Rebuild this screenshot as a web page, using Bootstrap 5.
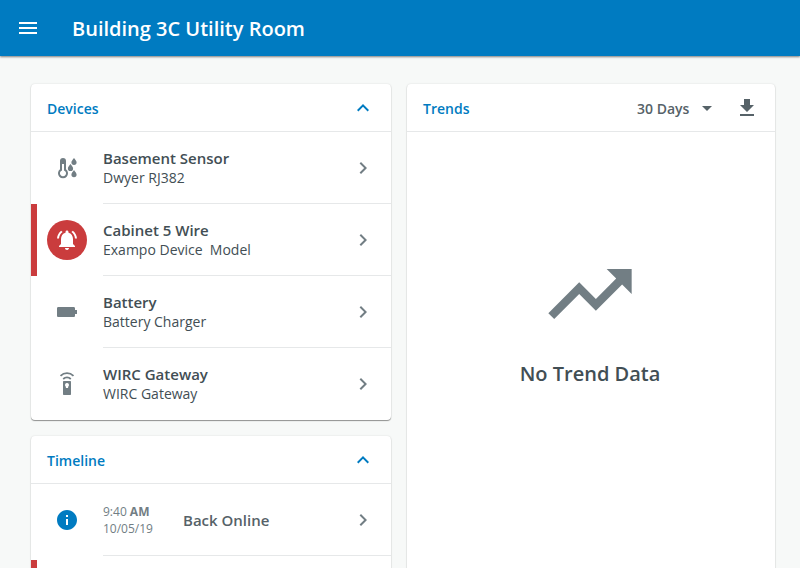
<!DOCTYPE html>
<html lang="en">
<head>
<meta charset="utf-8">
<meta name="viewport" content="width=device-width, initial-scale=1">
<title>Building 3C Utility Room</title>
<link href="https://cdn.jsdelivr.net/npm/bootstrap@5.3.0/dist/css/bootstrap.min.css" rel="stylesheet">
<style>
:root { --blue: #007bc1; --ink: #424e54; --slate: #727e84; --alert: #ca3c3d; --rule: #e6e8e9; }
body { font-family: "Open Sans", sans-serif; font-size: 14px; line-height: 20px; color: var(--ink); background: #f7f9f8; }
svg { display: block; width: 24px; height: 24px; fill: currentColor; flex: none; }
.app-bar { height: 56px; background: var(--blue); box-shadow: 0 1px 2px rgba(0,0,0,.5); z-index: 1; }
.app-title { font-size: 20px; line-height: 28px; font-weight: 600; padding-top: 2px; }
.dashboard { display: grid; grid-template-columns: 360fr 368fr; gap: 16px; padding: 28px 25px 28px 31px; }
.panel { background: #fff; border-radius: 4px; box-shadow: 0 1px 1px rgba(0,0,0,.4), 0 0 2px rgba(0,0,0,.12); overflow: hidden; }
.panel-head { height: 48px; padding: 0 16px; border-bottom: 1px solid var(--rule); color: var(--blue); }
.panel-title { font-size: 14px; line-height: 20px; font-weight: 600; margin: 0; padding-top: 2px; }
.icon-btn { border: 0; padding: 0; background: none; color: inherit; }
.entry { display: flex; gap: 16px; height: 72px; padding-left: 16px; color: inherit; text-decoration: none; }
.entry.alarm { box-shadow: inset 6px 0 var(--alert); }
.entry-icon { width: 40px; height: 40px; border-radius: 50%; color: var(--slate); }
.alarm .entry-icon { background: var(--alert); color: #fff; }
.entry-body { border-bottom: 1px solid var(--rule); padding-right: 16px; }
li:last-child .entry-body { border-color: transparent; }
.entry-body svg { color: var(--slate); }
.entry-name { font-size: 15px; font-weight: 600; }
.stamp { width: 80px; font-size: 12px; line-height: 17px; color: var(--slate); }
.event-name, .range { color: #566268; }
.range-select { appearance: none; border: 0; background: none; padding: 2px 29px 0 0; font-size: 14px; line-height: 20px; font-weight: 600; color: inherit; }
.range-arrow { margin-left: -24px; pointer-events: none; }
.empty-state { padding: 112px 2px 0 0; }
.empty-state svg { width: 100px; height: 100px; color: var(--slate); }
.empty-text { font-size: 20px; line-height: 28px; font-weight: 600; margin-top: 16px; }
</style>
<script src="https://cdn.jsdelivr.net/npm/bootstrap@5.3.0/dist/js/bootstrap.bundle.min.js"></script>
</head>
<body class="vh-100 d-flex flex-column overflow-hidden">
<svg class="d-none" aria-hidden="true">
  <symbol id="up" viewBox="0 0 24 24"><path d="M12 8l-6 6 1.41 1.41L12 10.83l4.59 4.58L18 14z"/></symbol>
  <symbol id="next" viewBox="0 0 24 24"><path d="M10 6L8.59 7.41 13.17 12l-4.58 4.59L10 18l6-6z"/></symbol>
</svg>
<header class="app-bar d-flex align-items-center flex-shrink-0 px-3 text-white">
  <button class="icon-btn me-3" type="button" aria-label="Menu"><svg viewBox="0 0 24 24"><path d="M3 18h18v-2H3v2zm0-5h18v-2H3v2zm0-7v2h18V6H3z"/></svg></button>
  <h1 class="app-title mb-0 ms-3">Building 3C Utility Room</h1>
</header>
<main class="dashboard flex-shrink-0">
  <div class="d-flex flex-column gap-3">
    <section class="panel">
      <div class="panel-head d-flex align-items-center justify-content-between">
        <h2 class="panel-title">Devices</h2>
        <button class="icon-btn" type="button" aria-label="Collapse devices"><svg><use href="#up"/></svg></button>
      </div>
      <ul class="list-unstyled mb-0">
        <li><a class="entry align-items-center" href="#">
          <span class="entry-icon d-flex align-items-center justify-content-center"><svg viewBox="0 0 24 24"><path fill-rule="evenodd" d="M5 5a3 3 0 0 1 6 0v8.3a5 5 0 1 1-6 0zM7 8v6.4a3 3 0 1 0 2 0V8z"/><path d="M19 1.9c1 1.5 2.6 3 2.6 4.4a2.6 2.6 0 0 1-5.2 0C16.400 4.900 18 3.400 19 1.900zM15.500 8c1 1.500 2.600 3 2.600 4.400a2.600 2.600 0 0 1-5.200 0c0-1.400 1.600-2.900 2.600-4.400zM19 14c1 1.500 2.600 3 2.600 4.600a2.600 2.600 0 0 1-5.200 0c0-1.600 1.600-3.100 2.600-4.600z"/></svg></span>
          <span class="entry-body d-flex align-items-center flex-grow-1 h-100"><span class="flex-grow-1"><span class="entry-name d-block">Basement Sensor</span><span class="d-block">Dwyer RJ382</span></span><svg><use href="#next"/></svg></span>
        </a></li>
        <li><a class="entry alarm align-items-center" href="#">
          <span class="entry-icon d-flex align-items-center justify-content-center"><svg viewBox="0 0 24 24"><path d="M7.580 4.080L6.150 2.650C3.750 4.480 2.170 7.300 2.030 10.500h2c.15-2.650 1.510-4.970 3.550-6.420zm12.390 6.420h2c-.15-3.200-1.730-6.020-4.120-7.850l-1.420 1.430c2.020 1.450 3.390 3.770 3.540 6.420zM18 11c0-3.070-1.640-5.640-4.500-6.320V4c0-.83-.67-1.500-1.500-1.500s-1.500.67-1.500 1.500v.68C7.630 5.360 6 7.920 6 11v5l-2 2v1h16v-1l-2-2v-5zm-6 11c.14 0 .27-.01.4-.04.65-.14 1.180-.58 1.440-1.180.1-.24.15-.5.15-.78h-4c.01 1.100.9 2 2.010 2z"/></svg></span>
          <span class="entry-body d-flex align-items-center flex-grow-1 h-100"><span class="flex-grow-1"><span class="entry-name d-block">Cabinet 5 Wire</span><span class="d-block">Exampo Device &nbsp;Model</span></span><svg><use href="#next"/></svg></span>
        </a></li>
        <li><a class="entry align-items-center" href="#">
          <span class="entry-icon d-flex align-items-center justify-content-center"><svg viewBox="0 0 24 24"><path d="M3.300 7h15.400c.7 0 1.300.6 1.300 1.300V10h2v4h-2v1.700c0 .7-.6 1.300-1.300 1.300H3.300C2.600 17 2 16.400 2 15.700V8.300C2 7.600 2.600 7 3.300 7z"/></svg></span>
          <span class="entry-body d-flex align-items-center flex-grow-1 h-100"><span class="flex-grow-1"><span class="entry-name d-block">Battery</span><span class="d-block">Battery Charger</span></span><svg><use href="#next"/></svg></span>
        </a></li>
        <li><a class="entry align-items-center" href="#">
          <span class="entry-icon d-flex align-items-center justify-content-center"><svg viewBox="0 0 24 24"><path fill-rule="evenodd" d="M8.700 9h6.600c.4 0 .7.3.7.7v12.600c0 .4-.3.7-.7.7H8.700c-.4 0-.7-.3-.7-.7V9.700c0-.4.3-.7.7-.7zM12 11a2 2 0 0 0-1.300 3.500l.3 1.500h2l.3-1.500A2 2 0 0 0 12 11z"/><path d="M5.500 3.800c3.700-3.500 9.300-3.500 13 0M8.200 7c2.200-2 5.400-2 7.600 0" fill="none" stroke="currentColor" stroke-width="1.800"/></svg></span>
          <span class="entry-body d-flex align-items-center flex-grow-1 h-100"><span class="flex-grow-1"><span class="entry-name d-block">WIRC Gateway</span><span class="d-block">WIRC Gateway</span></span><svg><use href="#next"/></svg></span>
        </a></li>
      </ul>
    </section>
    <section class="panel">
      <div class="panel-head d-flex align-items-center justify-content-between">
        <h2 class="panel-title">Timeline</h2>
        <button class="icon-btn" type="button" aria-label="Collapse timeline"><svg><use href="#up"/></svg></button>
      </div>
      <ul class="list-unstyled mb-0">
        <li><a class="entry align-items-center" href="#">
          <span class="entry-icon d-flex align-items-center justify-content-center"><svg viewBox="0 0 24 24"><path fill="#007bc1" d="M12 2C6.480 2 2 6.480 2 12s4.480 10 10 10 10-4.480 10-10S17.520 2 12 2zm1 15h-2v-6h2v6zm0-8h-2V7h2v2z"/></svg></span>
          <span class="entry-body d-flex align-items-center flex-grow-1 h-100"><span class="stamp"><span class="d-block">9:40 <b>AM</b></span><span class="d-block">10/05/19</span></span><span class="entry-name event-name flex-grow-1">Back Online</span><svg><use href="#next"/></svg></span>
        </a></li>
        <li class="pt-1"><div class="entry alarm"></div></li>
      </ul>
    </section>
  </div>
  <section class="panel">
    <div class="panel-head d-flex align-items-center">
      <h2 class="panel-title flex-grow-1">Trends</h2>
      <div class="range d-flex align-items-center gap-3">
        <div class="d-flex align-items-center"><select class="range-select" aria-label="Trend period"><option>30 Days</option></select><svg class="range-arrow" viewBox="0 0 24 24"><path d="M7 10l5 5 5-5z"/></svg></div>
        <button class="icon-btn" type="button" aria-label="Download"><svg viewBox="0 0 24 24"><path d="M19 9h-4V3H9v6H5l7 7 7-7zM5 18v2h14v-2H5z"/></svg></button>
      </div>
    </div>
    <div class="empty-state d-flex flex-column align-items-center">
      <svg viewBox="0 0 24 24"><path d="M16 6l2.290 2.290-4.880 4.880-4-4L2 16.590 3.410 18l6-6 4 4 6.300-6.290L22 12V6z"/></svg>
      <p class="empty-text mb-0">No Trend Data</p>
    </div>
  </section>
</main>
</body>
</html>
